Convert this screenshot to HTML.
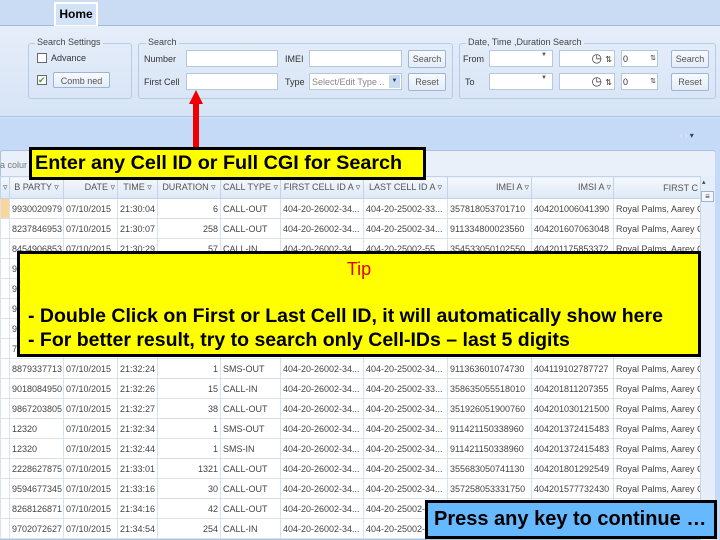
<!DOCTYPE html>
<html><head><meta charset="utf-8"><style>
*{margin:0;padding:0;box-sizing:border-box}
body{width:720px;height:540px;overflow:hidden;position:relative;background:#d3e3f7;font-family:"Liberation Sans",sans-serif;font-size:9px;color:#333}
.a{position:absolute}
.tabbar{left:0;top:0;width:720px;height:26px;background:#c9dcf4;border-bottom:1px solid #9fbbe0}
.ribbon{left:0;top:26px;width:720px;height:91px;background:linear-gradient(#e6eef9,#d6e4f6);border-bottom:1px solid #a9c2e3}
.grp{border:1px solid #b7cbe6;border-radius:3px}
.gt{background:#e3ecf8;padding:0 2px;color:#444;font-size:9px}
.in{background:#fff;border:1px solid #b6c8e0}
.btn{border:1px solid #9db4d4;border-radius:2px;background:linear-gradient(#f8fbff,#e3ecf7);text-align:center;line-height:16px;color:#555}
.band{left:0;top:118px;width:720px;height:34px;background:#c4daf6}
.panel{left:0;top:150px;width:716px;height:390px;background:#e9f0fa;border:1px solid #a9c1e2;border-radius:3px 3px 0 0}
table{border-collapse:collapse;position:absolute;left:0;top:176px;font-size:9px;color:#444;table-layout:fixed;width:700px}
td{height:20px;border:1px solid #d8e2ee;background:#fff;padding:0 2px;white-space:nowrap;overflow:hidden}
th{height:22px;border:1px solid #c2d3ea;background:linear-gradient(#f5f8fd,#dde8f6);font-weight:normal;color:#555;padding:0 2px;white-space:nowrap;overflow:hidden}
.r{text-align:right}
.y{background:#ffff00;border:3px solid #000}
</style></head><body>
<div class="a tabbar"></div>
<div class="a" style="left:54px;top:2px;width:44px;height:25px;background:#fff;padding:2px"><div style="background:#d3e3f7;height:21px;font-weight:bold;font-size:12px;color:#000;line-height:21px;text-align:center">Home</div></div>
<div class="a ribbon"></div>
<div class="a grp" style="left:28px;top:43px;width:104px;height:56px"></div>
<div class="a gt" style="left:35px;top:37px">Search Settings</div>
<div class="a" style="left:37px;top:53px;width:10px;height:10px;border:1px solid #667;background:#fff"></div>
<div class="a" style="left:51px;top:53px">Advance</div>
<div class="a" style="left:37px;top:75px;width:10px;height:10px;border:1px solid #667;background:#fff;color:#3a3;font-size:9px;line-height:8px">✔</div>
<div class="a btn" style="left:53px;top:72px;width:57px;height:16px">Comb ned</div>
<div class="a grp" style="left:138px;top:43px;width:315px;height:56px"></div>
<div class="a gt" style="left:146px;top:37px">Search</div>
<div class="a" style="left:144px;top:54px">Number</div>
<div class="a" style="left:144px;top:77px">First Cell</div>
<div class="a in" style="left:186px;top:50px;width:92px;height:17px"></div>
<div class="a in" style="left:186px;top:73px;width:92px;height:17px"></div>
<div class="a" style="left:285px;top:54px">IMEI</div>
<div class="a" style="left:285px;top:77px">Type</div>
<div class="a in" style="left:309px;top:50px;width:93px;height:17px"></div>
<div class="a in" style="left:309px;top:73px;width:93px;height:17px;color:#888;padding:3px 2px">Select/Edit Type ..</div>
<div class="a" style="left:389px;top:75px;width:11px;height:13px;background:#c9dbf3;font-size:6px;text-align:center;line-height:13px">▼</div>
<div class="a btn" style="left:408px;top:50px;width:38px;height:18px">Search</div>
<div class="a btn" style="left:408px;top:73px;width:38px;height:18px">Reset</div>
<div class="a grp" style="left:459px;top:43px;width:257px;height:56px"></div>
<div class="a gt" style="left:466px;top:37px">Date, Time ,Duration Search</div>
<div class="a" style="left:463px;top:54px">From</div>
<div class="a" style="left:465px;top:77px">To</div>
<div class="a in" style="left:489px;top:50px;width:64px;height:17px"></div>
<div class="a in" style="left:489px;top:73px;width:64px;height:17px"></div>
<div class="a" style="left:541px;top:52px;font-size:6px;color:#555">▼</div>
<div class="a" style="left:541px;top:75px;font-size:6px;color:#555">▼</div>
<div class="a in" style="left:559px;top:50px;width:56px;height:17px;text-align:right;font-size:12px;line-height:15px;padding-right:2px">◷ <span style="font-size:8px">⇅</span></div>
<div class="a in" style="left:559px;top:73px;width:56px;height:17px;text-align:right;font-size:12px;line-height:15px;padding-right:2px">◷ <span style="font-size:8px">⇅</span></div>
<div class="a in" style="left:621px;top:50px;width:37px;height:17px;padding:3px 1px">0<span style="float:right;font-size:7px">⇅</span></div>
<div class="a in" style="left:621px;top:73px;width:37px;height:17px;padding:3px 1px">0<span style="float:right;font-size:7px">⇅</span></div>
<div class="a btn" style="left:671px;top:50px;width:38px;height:18px">Search</div>
<div class="a btn" style="left:671px;top:73px;width:38px;height:18px">Reset</div>
<div class="a band"></div>
<div class="a" style="left:680px;top:131px;color:#eef;font-size:8px">‹ › <span style="color:#345">▾</span></div>
<div class="a panel"></div>
<div class="a" style="left:0;top:160px;color:#777">a colur</div>
<table>
<colgroup><col style="width:9px"><col style="width:54px"><col style="width:54px"><col style="width:40px"><col style="width:63px"><col style="width:60px"><col style="width:83px"><col style="width:84px"><col style="width:84px"><col style="width:82px"><col style="width:87px"></colgroup>
<tr><th>▿</th><th>B PARTY ▿</th><th class="r">DATE ▿</th><th>TIME ▿</th><th>DURATION ▿</th><th>CALL TYPE ▿</th><th>FIRST CELL ID A ▿</th><th>LAST CELL ID A ▿</th><th class="r">IMEI A ▿</th><th class="r">IMSI A ▿</th><th class="r">FIRST C</th></tr>
<tr><td style="background:#fbd69a"></td><td>9930020979</td><td>07/10/2015</td><td>21:30:04</td><td class="r">6</td><td>CALL-OUT</td><td>404-20-26002-34...</td><td>404-20-25002-33...</td><td>357818053701710</td><td>404201006041390</td><td>Royal Palms, Aarey C</td></tr>
<tr><td></td><td>8237846953</td><td>07/10/2015</td><td>21:30:07</td><td class="r">258</td><td>CALL-OUT</td><td>404-20-26002-34...</td><td>404-20-25002-34...</td><td>911334800023560</td><td>404201607063048</td><td>Royal Palms, Aarey C</td></tr>
<tr><td></td><td>8454906853</td><td>07/10/2015</td><td>21:30:29</td><td class="r">57</td><td>CALL-IN</td><td>404-20-26002-34</td><td>404-20-25002-55</td><td>354533050102550</td><td>404201175853372</td><td>Royal Palms, Aarey C</td></tr>
<tr><td></td><td>9930020979</td><td>07/10/2015</td><td>21:30:40</td><td class="r">6</td><td>CALL-OUT</td><td>404-20-26002-34...</td><td>404-20-25002-34...</td><td>911334800023560</td><td>404201607063048</td><td>Royal Palms, Aarey C</td></tr>
<tr><td></td><td>9930020979</td><td>07/10/2015</td><td>21:31:00</td><td class="r">6</td><td>CALL-OUT</td><td>404-20-26002-34...</td><td>404-20-25002-34...</td><td>911334800023560</td><td>404201607063048</td><td>Royal Palms, Aarey C</td></tr>
<tr><td></td><td>9930020979</td><td>07/10/2015</td><td>21:31:10</td><td class="r">6</td><td>CALL-OUT</td><td>404-20-26002-34...</td><td>404-20-25002-34...</td><td>911334800023560</td><td>404201607063048</td><td>Royal Palms, Aarey C</td></tr>
<tr><td></td><td>9930020979</td><td>07/10/2015</td><td>21:31:20</td><td class="r">6</td><td>CALL-OUT</td><td>404-20-26002-34...</td><td>404-20-25002-34...</td><td>911334800023560</td><td>404201607063048</td><td>Royal Palms, Aarey C</td></tr>
<tr><td></td><td>7500000000</td><td>07/10/2015</td><td>21:31:30</td><td class="r">6</td><td>CALL-OUT</td><td>404-20-26002-34...</td><td>404-20-25002-34...</td><td>911334800023560</td><td>404201607063048</td><td>Royal Palms, Aarey C</td></tr>
<tr><td></td><td>8879337713</td><td>07/10/2015</td><td>21:32:24</td><td class="r">1</td><td>SMS-OUT</td><td>404-20-26002-34...</td><td>404-20-25002-34...</td><td>911363601074730</td><td>404119102787727</td><td>Royal Palms, Aarey C</td></tr>
<tr><td></td><td>9018084950</td><td>07/10/2015</td><td>21:32:26</td><td class="r">15</td><td>CALL-IN</td><td>404-20-26002-34...</td><td>404-20-25002-33...</td><td>358635055518010</td><td>404201811207355</td><td>Royal Palms, Aarey C</td></tr>
<tr><td></td><td>9867203805</td><td>07/10/2015</td><td>21:32:27</td><td class="r">38</td><td>CALL-OUT</td><td>404-20-26002-34...</td><td>404-20-25002-34...</td><td>351926051900760</td><td>404201030121500</td><td>Royal Palms, Aarey C</td></tr>
<tr><td></td><td>12320</td><td>07/10/2015</td><td>21:32:34</td><td class="r">1</td><td>SMS-OUT</td><td>404-20-26002-34...</td><td>404-20-25002-34...</td><td>911421150338960</td><td>404201372415483</td><td>Royal Palms, Aarey C</td></tr>
<tr><td></td><td>12320</td><td>07/10/2015</td><td>21:32:44</td><td class="r">1</td><td>SMS-IN</td><td>404-20-26002-34...</td><td>404-20-25002-34...</td><td>911421150338960</td><td>404201372415483</td><td>Royal Palms, Aarey C</td></tr>
<tr><td></td><td>2228627875</td><td>07/10/2015</td><td>21:33:01</td><td class="r">1321</td><td>CALL-OUT</td><td>404-20-26002-34...</td><td>404-20-25002-34...</td><td>355683050741130</td><td>404201801292549</td><td>Royal Palms, Aarey C</td></tr>
<tr><td></td><td>9594677345</td><td>07/10/2015</td><td>21:33:16</td><td class="r">30</td><td>CALL-OUT</td><td>404-20-26002-34...</td><td>404-20-25002-34...</td><td>357258053331750</td><td>404201577732430</td><td>Royal Palms, Aarey C</td></tr>
<tr><td></td><td>8268126871</td><td>07/10/2015</td><td>21:34:16</td><td class="r">42</td><td>CALL-OUT</td><td>404-20-26002-34...</td><td>404-20-25002-34...</td><td></td><td></td><td></td></tr>
<tr><td></td><td>9702072627</td><td>07/10/2015</td><td>21:34:54</td><td class="r">254</td><td>CALL-IN</td><td>404-20-26002-34...</td><td>404-20-25002-34...</td><td></td><td></td><td></td></tr>
</table>
<div class="a" style="left:700px;top:176px;width:15px;height:364px;background:#e6eef9;border-left:1px solid #c8d6ea"></div>
<div class="a" style="left:702px;top:178px;font-size:7px;color:#444">▴</div>
<div class="a" style="left:701px;top:191px;width:13px;height:11px;border:1px solid #9db4d4;background:#f3f7fc;font-size:8px;text-align:center;line-height:9px">≡</div>
<div class="a" style="left:715px;top:150px;width:5px;height:390px;background:#c4daf6"></div>
<div class="a" style="left:193px;top:103px;width:6px;height:45px;background:#ee0000"></div>
<div class="a" style="left:189px;top:90px;width:0;height:0;border-left:7px solid transparent;border-right:7px solid transparent;border-bottom:14px solid #ee0000"></div>
<div class="a y" style="left:29px;top:147px;width:397px;height:33px;font-weight:bold;font-size:19.8px;color:#000;line-height:27px;padding-left:3px;white-space:nowrap">Enter any Cell ID or Full CGI for Search</div>
<div class="a y" style="left:17px;top:251px;width:684px;height:106px;font-weight:bold;color:#000;white-space:nowrap">
<div style="text-align:center;color:#e00000;font-size:18px;font-weight:normal;margin-top:5px">Tip</div>
<div style="font-size:19.5px;margin:24px 0 0 8px;line-height:24px">- Double Click on First or Last Cell ID, it will automatically show here<br>- For better result, try to search only Cell-IDs – last 5 digits</div>
</div>
<div class="a" style="left:425px;top:500px;width:292px;height:39px;background:#66b8ff;border:3px solid #000;font-weight:bold;font-size:20px;color:#000;line-height:33px;padding-left:6px;white-space:nowrap">Press any key to continue …</div>
</body></html>
